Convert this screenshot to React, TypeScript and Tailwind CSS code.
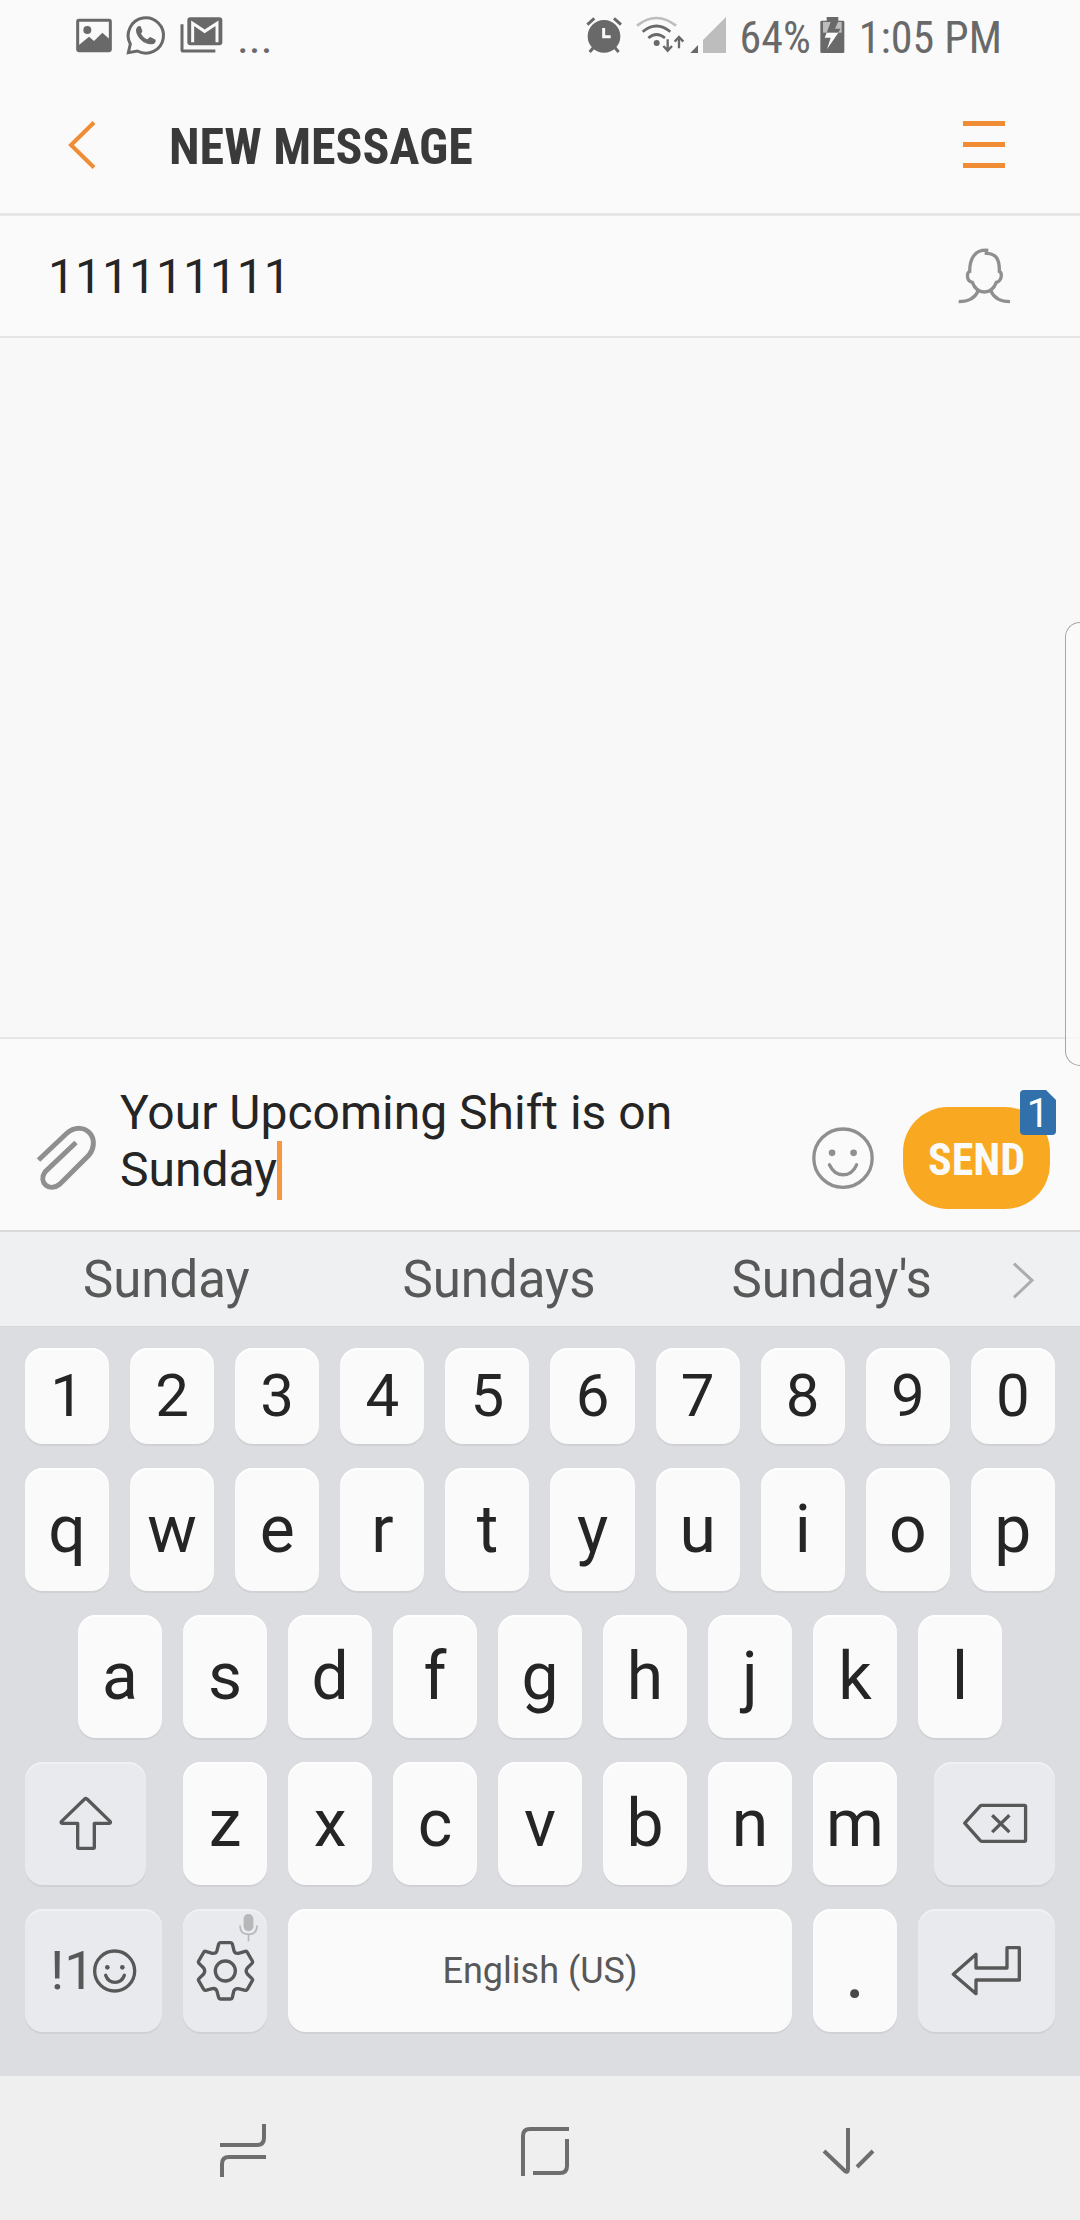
import type { ReactNode } from "react";

const CONDENSED = "font-['Roboto_Condensed',Roboto,sans-serif]";

function StatusBar() {
  return (
    <div className={`flex h-[76px] items-baseline justify-between pt-3 pr-[78px] pl-[76px] text-[44px] leading-[52px] text-[#696969] ${CONDENSED}`}>
      <div className="flex items-baseline gap-[14px]">
        <svg viewBox="78 54 108 105" className="h-[35px] w-[36px]" fill="currentColor">
          <rect x="83" y="61" width="98" height="91" rx="4" fill="none" stroke="currentColor" strokeWidth="9" />
          <circle cx="112" cy="90" r="12" />
          <path d="M86 136 117 110l15 13 25-25 22 20v34H86z" />
        </svg>
        <svg viewBox="234 48 120 114" className="h-[38px] w-[40px] overflow-visible" fill="currentColor">
          <path d="M247 135 241 161 268 156A53 53 0 1 0 247 135Z" fill="none" stroke="currentColor" strokeWidth="9" />
          <path d="M274 81C268 82 264 88 264 95C265 113 287 137 311 136C320 135 324 130 323 122L307 114C302 115 301 121 297 121C289 118 281 110 279 103C283 99 284 97 282 93L278 82Z" />
        </svg>
        <svg viewBox="392 54 129 108" className="h-[36px] w-[43px]" fill="currentColor">
          <path d="M398 76V152Q398 156 402 156H498" fill="none" stroke="currentColor" strokeWidth="9" />
          <rect x="414" y="55" width="105" height="84" rx="9" />
          <path d="M430 130V73L466 97 503 73V130" fill="none" stroke="#fafafa" strokeWidth="9" />
        </svg>
        <span className="text-[45px]">...</span>
      </div>
      <div className="flex items-baseline">
        <svg viewBox="72 54 108 108" className="h-[36px] w-[36px]" fill="none" stroke="currentColor" strokeWidth="9">
          <circle cx="126" cy="112" r="49" fill="currentColor" stroke="none" />
          <path d="M76 77 97 58M156 58 177 77M94 146 83 159M159 146 170 159" />
          <path d="M125 87V113H146" stroke="#fafafa" />
        </svg>
        <svg viewBox="222 50 147 114" className="ml-[14px] h-[38px] w-[49px]" fill="none" stroke="currentColor" strokeWidth="8">
          <path d="M225 82Q283 36 342 82" stroke="#bdbdbd" />
          <path d="M242 100Q283 66 325 100M259 119Q283 98 309 119" />
          <circle cx="284" cy="134" r="9" fill="currentColor" stroke="none" />
          <path d="M317 123V156M304 143 317 157 330 143M351 150V118M338 130 351 116 364 130" strokeWidth="7" />
        </svg>
        <svg viewBox="384 54 111 108" className="ml-[5px] h-[36px] w-[37px]">
          <path d="M385 162 408 138V162Z" fill="currentColor" />
          <path d="M423 162V123L492 54V162Z" fill="#bdbdbd" />
        </svg>
        <span className="ml-[13px]">64%</span>
        <svg viewBox="776 54 75 108" className="ml-[9px] h-[36px] w-[25px]">
          <path d="M796 54H831V65H845Q849 65 849 69V158Q849 162 845 162H781Q777 162 777 158V69Q777 65 781 65H796Z" fill="currentColor" />
          <path d="M785 69H841V101H785Z" fill="#bdbdbd" />
          <path d="M808 69H830L821 89H838L830 101H796Z" fill="currentColor" />
          <path d="M796 101H831L797 151 808 116H790Z" fill="#fafafa" />
        </svg>
        <span className="ml-[14px]">1:05 PM</span>
      </div>
    </div>
  );
}

function Header() {
  return (
    <header className="flex h-[140px] items-center border-b-[3px] border-[#e6e6e6] pr-[75px] pl-[68px] text-[#f08c34]">
      <button aria-label="Back">
        <svg viewBox="68 119 29 50" className="h-[50px] w-[29px]" fill="none" stroke="currentColor" strokeWidth="4">
          <path d="M94 121.500 71 144 94 166.500" />
        </svg>
      </button>
      <h1 className={`ml-[72px] flex-1 pt-1 text-[50px] leading-[64px] font-bold text-[#3a3a3a] ${CONDENSED}`}>NEW MESSAGE</h1>
      <button aria-label="Menu" className="flex w-[42px] flex-col gap-4">
        <span className="h-[5px] bg-current" />
        <span className="h-[5px] bg-current" />
        <span className="h-[5px] bg-current" />
      </button>
    </header>
  );
}

function Recipient() {
  return (
    <div className="flex h-[122px] items-center border-b-2 border-[#e6e6e6] pr-[69px] pl-[48px]">
      <input
        aria-label="Recipient"
        defaultValue="111111111"
        className="min-w-0 flex-1 bg-transparent text-[48px] leading-[57px] text-[#252525] outline-none"
      />
      <button aria-label="Contacts">
        <svg viewBox="174 504 157 168" className="h-[56px] w-[53px]" fill="none" stroke="#8f8f8f" strokeWidth="10">
          <path d="M264 511C224 507 208 535 208 574C199 576 197 604 216 607C222 623 233 635 252 636C271 635 282 623 288 607C307 602 305 577 297 574C298 538 288 521 258 520V511" />
          <path d="M175 665C205 665 224 655 234 632M329 665C300 665 281 655 271 632" />
        </svg>
      </button>
    </div>
  );
}

function Compose() {
  return (
    <div className="flex items-end border-y-2 border-t-[#e6e6e6] border-b-[#d9d9d9] pt-[45px] pr-[30px] pb-[21px] pl-[36px]">
      <button aria-label="Attach" className="mb-[18px]">
        <svg viewBox="36 1125 62 66" className="h-[66px] w-[62px]" fill="none" stroke="#8f8f8f" strokeWidth="5">
          <path d="M38.500 1160 66 1134C75 1126 85 1127 90.500 1134C95 1140 94 1149 89 1155L60 1184C49 1193 38 1182 45 1172L76 1142.500" />
        </svg>
      </button>
      <div className="relative mb-[11px] ml-[22px] min-w-0 flex-1">
        <textarea
          aria-label="Message"
          rows={2}
          defaultValue="Your Upcoming Shift is on Sunday"
          className="block w-full resize-none overflow-hidden bg-transparent text-[48px] leading-[57px] text-[#252525] outline-none"
        />
        <span className="absolute top-[57px] left-[157px] h-[59px] w-[5px] bg-[#f79840]" />
      </div>
      <button aria-label="Emoji" className="mb-[20px] ml-2">
        <svg viewBox="96 320 186 187" className="h-[62px] w-[62px]" fill="none" stroke="#8f8f8f" strokeWidth="10">
          <circle cx="189" cy="414" r="88" />
          <circle cx="156" cy="398" r="10" fill="#8f8f8f" stroke="none" />
          <circle cx="221" cy="398" r="10" fill="#8f8f8f" stroke="none" />
          <path d="M148 434Q162 464 189 464 217 464 230 434" strokeLinecap="round" />
        </svg>
      </button>
      <button className={`relative ml-[29px] h-[102px] w-[147px] rounded-[45px] bg-[#f9a821] pt-[3px] text-[44px] font-bold text-[#fafafa] ${CONDENSED}`}>
        SEND
        <span className="absolute -top-[17px] -right-[6px] flex h-[45px] w-[36px] items-center justify-center rounded-[4px] bg-[#3170ab] pt-[2px] font-['Roboto',sans-serif] text-[40px] leading-[45px] font-normal text-white [clip-path:polygon(0_0,26px_0,100%_10px,100%_100%,0_100%)]">
          1
        </span>
      </button>
    </div>
  );
}

function Suggestions() {
  return (
    <div className="flex h-[94px] items-center bg-[#eff0f2] pt-[2px] pr-[45px] text-[51px] leading-[62px] text-[#585858]">
      {["Sunday", "Sundays", "Sunday's"].map((word) => (
        <button key={word} className="flex-1">
          {word}
        </button>
      ))}
      <button aria-label="More suggestions" className="ml-[14px]">
        <svg viewBox="695 719 69 111" className="h-[37px] w-[23px]" fill="none" stroke="#acacad" strokeWidth="9">
          <path d="M701 724 755 774 701 825" />
        </svg>
      </button>
    </div>
  );
}

function Key({ children, label, tone = "light", className = "flex-[84_1_0]" }: { children?: ReactNode; label?: string; tone?: "light" | "dark"; className?: string }) {
  const skin =
    tone === "light"
      ? "bg-[#fafafa] text-[#252525] shadow-[0_2px_0_#d0d1d5,inset_0_2px_0_#ffffff]"
      : "bg-[#e9eaee] text-[#585858] shadow-[0_2px_0_#d0d1d5,inset_0_2px_0_#f0f1f3]";
  return (
    <button aria-label={label} className={`relative flex h-full min-w-0 items-center justify-center rounded-[18px] ${skin} ${className}`}>
      {children}
    </button>
  );
}

function Row({ keys }: { keys: string }) {
  return (
    <>
      {keys.split("").map((k) => (
        <Key key={k}>{k}</Key>
      ))}
    </>
  );
}

function Keyboard() {
  return (
    <div className="flex flex-col gap-6 border-t border-[#d5d6d9] bg-[#dcdde1] px-[25px] pt-[21px] pb-[44px] text-[66px] leading-[78px]">
      <div className="flex h-[96px] gap-[21px] text-[60px]">
        <Row keys="1234567890" />
      </div>
      <div className="flex h-[123px] gap-[21px]">
        <Row keys="qwertyuiop" />
      </div>
      <div className="flex h-[123px] gap-[21px] px-[53px]">
        <Row keys="asdfghjkl" />
      </div>
      <div className="flex h-[123px] gap-[37px]">
        <Key tone="dark" label="Shift" className="flex-[121_1_0]">
          <svg viewBox="176 166 162 165" className="h-[55px] w-[54px]" fill="none" stroke="currentColor" strokeWidth="10" strokeLinejoin="round">
            <path d="M253 175Q256 172 260 175L330 243Q331 248 326 248H282V320Q282 323 279 323H235Q232 323 232 320V248H187Q181 248 183 243Z" />
          </svg>
        </Key>
        <div className="flex flex-[714_1_0] gap-[21px]">
          <Row keys="zxcvbnm" />
        </div>
        <Key tone="dark" label="Backspace" className="flex-[121_1_0]">
          <svg viewBox="545 187 197 124" className="h-[41px] w-[66px]" fill="none" stroke="currentColor" strokeWidth="10" strokeLinejoin="round">
            <path d="M603 194H733Q736 194 736 197V300Q736 303 733 303H603Q601 303 599 301L552 248 599 196Q601 194 603 194ZM635 224 687 275M687 224 635 275" />
          </svg>
        </Key>
      </div>
      <div className="flex h-[123px] gap-[21px]">
        <Key tone="dark" label="Symbols and emoji" className="flex-[137_1_0]">
          <span className="text-[54px]">!1</span>
          <svg viewBox="276 624 132 132" className="-ml-[2px] h-[44px] w-[44px]" fill="none" stroke="currentColor" strokeWidth="10">
            <circle cx="341" cy="690" r="60" />
            <circle cx="319" cy="679" r="7" fill="currentColor" stroke="none" />
            <circle cx="364" cy="679" r="7" fill="currentColor" stroke="none" />
            <path d="M314 703Q322 724 342 724 362 724 370 703" strokeLinecap="round" />
          </svg>
        </Key>
        <Key tone="dark" label="Keyboard settings">
          <svg viewBox="585 597 177 186" className="h-[62px] w-[59px]" fill="none" stroke="currentColor" strokeWidth="10" strokeLinejoin="round">
            <path d="M658 605H689Q693 605 694 609L699 629Q702 638 712 637L733 631Q737 630 739 634L754 660Q756 664 753 667L739 681Q732 690 739 699L753 713Q756 716 754 719L739 745Q737 749 733 748L712 743Q701 742 698 751L694 770Q693 774 689 774H658Q654 774 653 770L648 751Q645 741 634 743L614 748Q610 749 608 745L593 719Q591 716 594 713L608 699Q614 690 608 681L594 667Q591 664 593 660L608 634Q610 630 614 631L634 637Q645 638 648 629L653 609Q654 605 658 605Z" />
            <circle cx="673" cy="690" r="30" />
          </svg>
          <svg viewBox="717 520 58 86" className="absolute top-[4px] right-[9px] h-[29px] w-[19px]" fill="none" stroke="#b6b7b9" strokeWidth="5">
            <rect x="731" y="522" width="30" height="52" rx="15" fill="#b6b7b9" stroke="none" />
            <path d="M720 557Q720 584 746 584 772 584 772 557M746 584V605" />
          </svg>
        </Key>
        <Key className="flex-[504_1_0]">
          <span className="text-[36px] text-[#585858]">English (US)</span>
        </Key>
        <Key>
          <span className="text-[80px] text-[#484848]">.</span>
        </Key>
        <Key tone="dark" label="Enter" className="flex-[137_1_0]">
          <svg viewBox="514 613 213 153" className="h-[51px] w-[71px]" fill="none" stroke="currentColor" strokeWidth="10" strokeLinejoin="round">
            <path d="M521 701 589 641V682H682V621H719V718H589V759Z" />
          </svg>
        </Key>
      </div>
    </div>
  );
}

function NavBar() {
  return (
    <nav className="flex h-[144px] items-center bg-[#efefef] pt-[5px] pr-[81px] pl-[92px] text-[#6e6e6e]">
      <button aria-label="Recent apps" className="flex flex-1 justify-center">
        <svg viewBox="219 2123 48 56" className="h-[56px] w-[48px]" fill="none" stroke="currentColor" strokeWidth="4">
          <path d="M220 2145H257Q264 2145 264 2138V2124M222 2177V2164Q222 2157 229 2157H266" />
        </svg>
      </button>
      <button aria-label="Home" className="flex flex-1 justify-center">
        <svg viewBox="520 2124 50 54" className="h-[54px] w-[50px]" fill="none" stroke="currentColor" strokeWidth="4">
          <path d="M523 2176V2136Q523 2129 530 2129H569M533 2173H560Q567 2173 567 2166V2139" />
        </svg>
      </button>
      <button aria-label="Hide keyboard" className="flex flex-1 justify-center">
        <svg viewBox="821 2126 54 50" className="h-[50px] w-[54px]" fill="none" stroke="currentColor" strokeWidth="4" strokeLinejoin="round">
          <path d="M848 2128V2169Q848 2173 845 2171L824 2151M857 2167 873 2151" />
        </svg>
      </button>
    </nav>
  );
}

export default function App() {
  return (
    <div className="relative flex min-h-screen flex-col overflow-hidden bg-[#fafafa] font-['Roboto',sans-serif]">
      <StatusBar />
      <Header />
      <Recipient />
      <main className="flex-1 bg-[#f8f8f8]" />
      <Compose />
      <Suggestions />
      <Keyboard />
      <NavBar />
      <div className="absolute top-[622px] right-0 h-[444px] w-[15px] rounded-l-[22px] border border-r-0 border-[#a6a6a6] bg-[#fafafa]/80" />
    </div>
  );
}
